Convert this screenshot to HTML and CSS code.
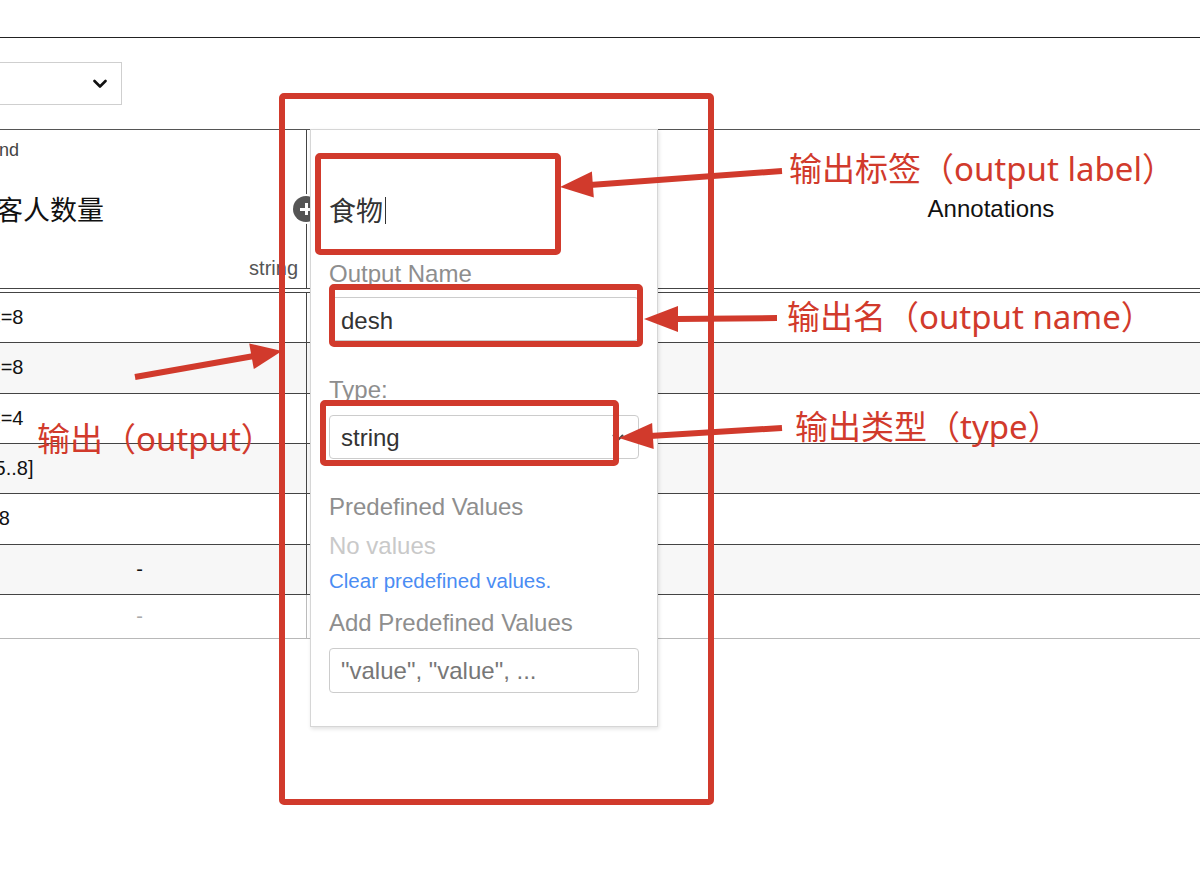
FILE: index.html
```html
<!DOCTYPE html>
<html lang="zh-CN">
<head>
<meta charset="utf-8">
<title>Decision table – output editor</title>
<link rel="stylesheet" href="styles.css">
</head>
<body>
<div class="app">
  <div class="topbar"></div>
  <div class="toolbar">
    <div class="select">
      <svg class="chev" width="14" height="10" viewBox="0 0 14 10"><polyline points="1.5,2 7,7.5 12.5,2" fill="none" stroke="#111" stroke-width="2.6" stroke-linecap="round" stroke-linejoin="round"/></svg>
    </div>
  </div>

  <div class="dt">
    <div class="dt-head">
      <div class="head-in">
        <div class="head-kind">And</div>
        <div class="head-label">客人数量</div>
        <div class="head-type">string</div>
        <span class="add-btn"></span>
      </div>
      <div class="head-out"></div>
      <div class="head-anno">Annotations</div>
    </div>
    <div class="dt-body">
      <div class="row">
        <div class="cell-in">&lt;=8</div><div></div><div></div>
      </div>
      <div class="row alt">
        <div class="cell-in">&gt;=8</div><div></div><div></div>
      </div>
      <div class="row">
        <div class="cell-in">&lt;=4</div><div></div><div></div>
      </div>
      <div class="row alt">
        <div class="cell-in">[5..8]</div><div></div><div></div>
      </div>
      <div class="row">
        <div class="cell-in shift">&gt;8</div><div></div><div></div>
      </div>
      <div class="row alt">
        <div class="cell-in empty">-</div><div></div><div></div>
      </div>
      <div class="row last">
        <div class="cell-in empty muted">-</div><div></div><div></div>
      </div>
    </div>
  </div>

  <div class="ctx">
    <div class="ctx-label">食物<span class="caret"></span></div>
    <div class="ctx-title t-name">Output Name</div>
    <div class="ctx-input name-input">desh</div>
    <div class="ctx-title t-type">Type:</div>
    <div class="ctx-input type-select">
      <span>string</span>
      <svg width="12" height="8" viewBox="0 0 12 8"><polyline points="1.5,1.5 6,6 10.5,1.5" fill="none" stroke="#444" stroke-width="2" stroke-linecap="round" stroke-linejoin="round"/></svg>
    </div>
    <div class="ctx-title t-predef">Predefined Values</div>
    <div class="no-values">No values</div>
    <div class="clear-link">Clear predefined values.</div>
    <div class="ctx-title t-add">Add Predefined Values</div>
    <div class="ctx-input values-input">"value", "value", ...</div>
  </div>

  <svg class="marks" width="1200" height="883" viewBox="0 0 1200 883">
    <g fill="none" stroke="#d13a2c" stroke-width="6" stroke-linejoin="round">
      <rect x="282" y="96" width="429" height="706" rx="2"/>
      <rect x="318" y="156" width="240" height="96" rx="2"/>
      <rect x="332" y="287" width="308" height="57" rx="2"/>
      <rect x="323" y="403" width="293" height="60" rx="2"/>
    </g>
    <g stroke="#d13a2c" stroke-width="6" stroke-linecap="butt">
      <line x1="782" y1="171" x2="590" y2="185"/>
      <line x1="777" y1="318" x2="676" y2="319"/>
      <line x1="782" y1="428" x2="650" y2="436"/>
      <line x1="135" y1="377" x2="254" y2="356"/>
    </g>
    <g fill="#d13a2c">
      <polygon points="560,187 593.8,197.6 591.9,171.6"/>
      <polygon points="644,319 678,306 678,332"/>
      <polygon points="619,438 653.7,448.9 652.1,422.9"/>
      <polygon points="282,351 253.8,369.1 249.2,343.5"/>
    </g>
  </svg>

  <div class="note n1">输出标签（output label）</div>
  <div class="note n2">输出名（output name）</div>
  <div class="note n3">输出类型（type）</div>
  <div class="note n4">输出（output）</div>
</div>
</body>
</html>
```

FILE: styles.css
```css
* { box-sizing: border-box; }

html, body {
  margin: 0;
  padding: 0;
}

body {
  width: 1200px;
  height: 883px;
  overflow: hidden;
  background: #fff;
  color: #222;
  font-family: "Liberation Sans", "Noto Sans CJK SC", sans-serif;
}

.app {
  position: relative;
  width: 1200px;
  height: 883px;
  overflow: hidden;
}

/* top bar + toolbar */
.topbar {
  height: 38px;
  border-bottom: 1px solid #222;
}

.toolbar {
  padding: 24px 0;
}

.select {
  width: 152px;
  height: 43px;
  margin-left: -30px;
  border: 1px solid #cfcfcf;
  background: #fff;
  display: flex;
  align-items: center;
  justify-content: flex-end;
  padding-right: 14px;
}

/* decision table */
.dt {
  margin-left: -27px;
  width: 1227px;
  border-top: 1px solid #555;
}

.dt-head {
  display: grid;
  grid-template-columns: 334px 475px 1fr;
  height: 159px;
  border-bottom: 1px solid #444;
}

.head-in {
  position: relative;
  border-right: 1px solid #444;
  display: flex;
  flex-direction: column;
  padding: 9px 8px 8px 14px;
}

.head-kind {
  font-size: 18px;
  line-height: 22px;
  color: #444;
}

.head-label {
  flex: 1;
  display: flex;
  align-items: center;
  padding-left: 9px;
  font-size: 27px;
  color: #111;
  font-family: "Noto Sans CJK SC", sans-serif;
}

.head-type {
  text-align: right;
  font-size: 20px;
  line-height: 24px;
  color: #555;
}

.add-btn {
  position: absolute;
  right: -13px;
  top: 50%;
  width: 26px;
  height: 26px;
  margin-top: -13px;
  border-radius: 50%;
  background: #555;
  box-shadow: 0 0 0 2px #fff;
  z-index: 1;
}

.add-btn::before,
.add-btn::after {
  content: "";
  position: absolute;
  left: 50%;
  top: 50%;
  background: #fff;
}

.add-btn::before {
  width: 12px;
  height: 3px;
  margin: -1.5px 0 0 -6px;
}

.add-btn::after {
  width: 3px;
  height: 12px;
  margin: -6px 0 0 -1.5px;
}

.head-anno {
  display: flex;
  align-items: center;
  justify-content: center;
  font-size: 24px;
  color: #111;
}

.dt-body {
  margin-top: 3px;
  border-top: 1px solid #444;
}

.row {
  display: grid;
  grid-template-columns: 334px 475px 1fr;
  height: 50.33px;
  border-bottom: 1px solid #444;
}

.row.alt {
  background: #f7f7f7;
}

.row.last {
  height: 44px;
  border-bottom-color: #b8b8b8;
}

.cell-in {
  border-right: 1px solid #444;
  padding-left: 16px;
  display: flex;
  align-items: center;
  font-size: 20px;
  color: #111;
}

.cell-in.shift {
  padding-left: 14px;
}

.cell-in.empty {
  justify-content: center;
  padding-left: 0;
}

.row.last .cell-in {
  border-right-color: #bbb;
}

.cell-in.muted {
  color: #aaa;
}

/* output context menu */
.ctx {
  position: absolute;
  left: 310px;
  top: 129px;
  width: 348px;
  height: 598px;
  background: #fff;
  border: 1px solid #d6d6d6;
  box-shadow: 1px 2px 4px rgba(0, 0, 0, 0.12);
  padding: 51px 18px 0 18px;
  z-index: 3;
}

.ctx-label {
  height: 58px;
  line-height: 58px;
  font-size: 27px;
  color: #333;
  font-family: "Noto Sans CJK SC", sans-serif;
  display: flex;
  align-items: center;
}

.caret {
  display: inline-block;
  width: 1px;
  height: 27px;
  background: #333;
  margin-left: 2px;
}

.ctx-title {
  font-size: 24px;
  line-height: 28px;
  color: #8e8e8e;
}

.t-name { margin-top: 21px; }
.t-type { margin-top: 35px; }
.t-predef { margin-top: 34px; }
.t-add { margin-top: 16px; }

.ctx-input {
  height: 44px;
  border: 1px solid #ccc;
  border-radius: 4px;
  padding: 0 11px;
  display: flex;
  align-items: center;
  font-size: 24px;
  color: #333;
  background: #fff;
}

.name-input {
  margin-top: 9px;
  padding-top: 3px;
}

.type-select {
  margin-top: 11px;
  justify-content: space-between;
  padding-right: 14px;
  padding-top: 2px;
}

.no-values {
  margin-top: 11px;
  font-size: 24px;
  line-height: 28px;
  color: #c9c9c9;
}

.clear-link {
  margin-top: 9px;
  font-size: 20.5px;
  line-height: 24px;
  color: #4a8cf3;
}

.values-input {
  margin-top: 11px;
  height: 45px;
  color: #777;
}

/* red annotation overlay */
.marks {
  position: absolute;
  left: 0;
  top: 0;
  pointer-events: none;
  z-index: 5;
}

.note {
  position: absolute;
  font-family: "Noto Sans", "Noto Sans CJK SC", sans-serif;
  font-size: 33px;
  line-height: 40px;
  color: #d13a2c;
  white-space: nowrap;
  z-index: 6;
}

.n1 { left: 789px; top: 149px; }
.n2 { left: 787px; top: 297px; }
.n3 { left: 795px; top: 407px; }
.n4 { left: 37px; top: 419px; }
```
